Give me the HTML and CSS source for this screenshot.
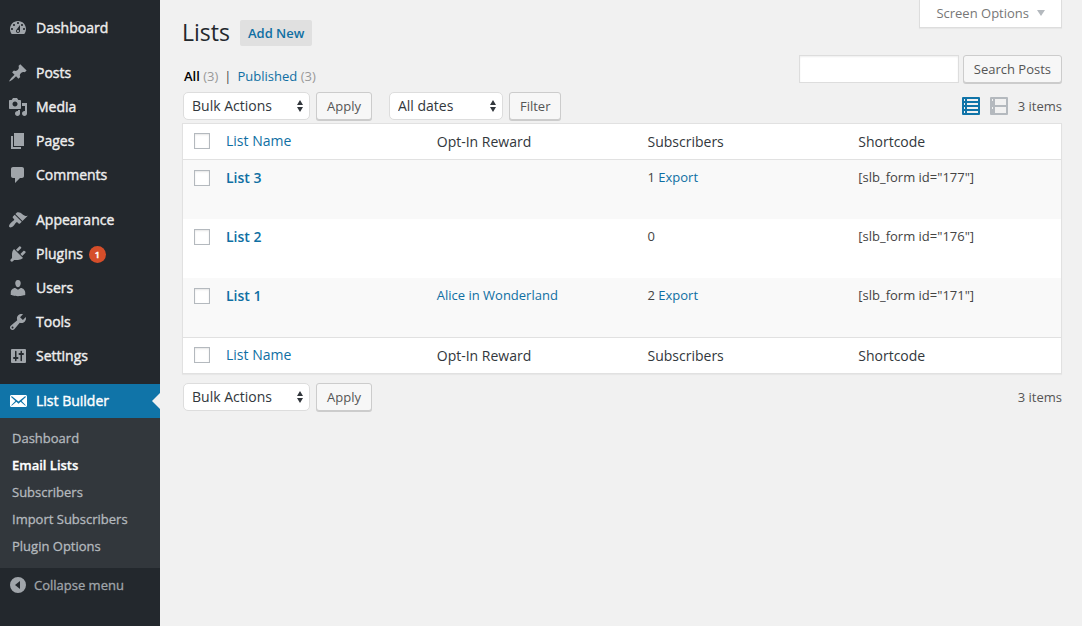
FILE: index.html
```
<!DOCTYPE html>
<html lang="en">
<head>
<meta charset="utf-8">
<title>Lists</title>
<link rel="stylesheet" href="styles.css">
</head>
<body>
<div class="layout">
  <nav class="sidebar" aria-label="Main menu">
    <ul class="menu">
      <li><a class="menu-item" href="#"><svg class="icon" viewBox="0 0 20 20"><path d="M3.76 16h12.48c1.1-1.37 1.76-3.11 1.76-5 0-4.42-3.58-8-8-8s-8 3.58-8 8c0 1.89.66 3.63 1.76 5zM10 4c.55 0 1 .45 1 1s-.45 1-1 1-1-.45-1-1 .45-1 1-1zM6 6c.55 0 1 .45 1 1s-.45 1-1 1-1-.45-1-1 .45-1 1-1zm8 0c.55 0 1 .45 1 1s-.45 1-1 1-1-.45-1-1 .45-1 1-1zm-5.370 5.550L12 7v6c0 1.100-.9 2-2 2s-2-.9-2-2c0-.57.24-1.080.63-1.450zM4 10c.55 0 1 .45 1 1s-.45 1-1 1-1-.45-1-1 .45-1 1-1zm12 0c.55 0 1 .45 1 1s-.45 1-1 1-1-.45-1-1 .45-1 1-1zm-5 3c0-.55-.45-1-1-1s-1 .45-1 1 .45 1 1 1 1-.45 1-1z"/></svg>Dashboard</a></li>
      <li class="group-start"><a class="menu-item" href="#"><svg class="icon" viewBox="0 0 20 20"><path d="M10.440 3.020l1.820-1.820 6.360 6.350-1.830 1.820c-1.050-.68-2.480-.57-3.410.36l-.75.75c-.92.93-1.040 2.350-.35 3.410l-1.830 1.820-2.410-2.410-2.800 2.790c-.42.42-3.380 2.710-3.800 2.290s1.860-3.390 2.280-3.810l2.790-2.790L4.100 9.360l1.830-1.820c1.050.69 2.480.57 3.400-.36l.75-.75c.93-.92 1.050-2.350.36-3.410z"/></svg>Posts</a></li>
      <li><a class="menu-item" href="#"><svg class="icon" viewBox="0 0 20 20"><path d="M13 11V4c0-.55-.45-1-1-1h-1.670L9 1H5L3.670 3H2c-.55 0-1 .45-1 1v7c0 .55.45 1 1 1h10c.55 0 1-.45 1-1zM7 4.500c1.380 0 2.500 1.120 2.500 2.500S8.380 9.500 7 9.500 4.500 8.380 4.500 7 5.620 4.500 7 4.500zM14 6h5v10.500c0 1.380-1.120 2.500-2.500 2.500S14 17.880 14 16.500s1.120-2.500 2.500-2.500c.17 0 .34.02.5.05V9h-3V6zm-4 8.050V13h2v3.500c0 1.380-1.120 2.500-2.500 2.500S7 17.880 7 16.500 8.120 14 9.500 14c.17 0 .34.02.5.05z"/></svg>Media</a></li>
      <li><a class="menu-item" href="#"><svg class="icon" viewBox="0 0 20 20"><path d="M6 15V2h10v13H6zm-1 1h8v2H3V5h2v11z"/></svg>Pages</a></li>
      <li><a class="menu-item" href="#"><svg class="icon" viewBox="0 0 20 20"><path d="M5 2h9c1.100 0 2 .9 2 2v7c0 1.100-.9 2-2 2h-2l-5 5v-5H5c-1.100 0-2-.9-2-2V4c0-1.100.9-2 2-2z"/></svg>Comments</a></li>
      <li class="group-start"><a class="menu-item" href="#"><svg class="icon" viewBox="0 0 20 20"><path d="M14.480 11.060L7.410 3.990l1.500-1.500c.5-.56 2.300-.47 3.510.32 1.210.8 1.430 1.280 2.910 2.100 1.180.64 2.450 1.260 4.450.85zm-.71.71L6.700 4.700 4.930 6.470c-.39.39-.39 1.020 0 1.410l1.060 1.060c.39.39.39 1.030 0 1.420-.6.6-1.430 1.110-2.210 1.690-.35.26-.7.53-1.010.84C1.430 14.230.4 16.080 1.400 17.070c.99 1 2.840-.03 4.180-1.360.31-.31.58-.66.85-1.020.57-.78 1.080-1.610 1.690-2.210.39-.39 1.020-.39 1.410 0l1.060 1.060c.39.39 1.020.39 1.410 0z"/></svg>Appearance</a></li>
      <li><a class="menu-item" href="#"><svg class="icon" viewBox="0 0 20 20"><path d="M13.110 4.360L9.870 7.600 8 5.730l3.240-3.240c.35-.34 1.050-.2 1.560.32.52.51.66 1.210.31 1.550zm-8 1.770l.91-1.120 9.010 9.010-1.190.84c-.71.71-2.630 1.160-3.820 1.160H6.140L4.900 17.260c-.59.59-1.540.59-2.120 0-.59-.58-.59-1.530 0-2.120l1.240-1.240v-3.880c0-1.130.4-3.190 1.090-3.890zm7.260 3.970l3.240-3.240c.34-.35 1.040-.21 1.550.31.52.51.66 1.210.31 1.550l-3.240 3.250z"/></svg>Plugins <span class="count-badge">1</span></a></li>
      <li><a class="menu-item" href="#"><svg class="icon" viewBox="0 0 20 20"><path d="M10 9.250c-2.270 0-2.730-3.440-2.730-3.440C7 4.020 7.820 2 9.970 2c2.160 0 2.980 2.020 2.710 3.810 0 0-.41 3.440-2.680 3.440zm0 2.570L12.720 10c2.390 0 4.520 2.330 4.520 4.530v2.490s-3.650 1.130-7.240 1.130c-3.650 0-7.240-1.130-7.240-1.130v-2.490c0-2.250 1.940-4.480 4.470-4.480z"/></svg>Users</a></li>
      <li><a class="menu-item" href="#"><svg class="icon" viewBox="0 0 20 20"><path d="M16.680 9.770c-1.340 1.340-3.300 1.670-4.950.99l-5.410 6.520c-.99.99-2.590.99-3.580 0s-.99-2.590 0-3.570l6.520-5.420c-.68-1.650-.35-3.610.99-4.950 1.280-1.280 3.120-1.620 4.720-1.060l-2.890 2.890 2.820 2.820 2.860-2.870c.53 1.580.18 3.390-1.080 4.650zM3.810 16.210c.4.39 1.040.39 1.430 0 .4-.4.4-1.040 0-1.430-.39-.4-1.030-.4-1.430 0-.39.39-.39 1.030 0 1.430z"/></svg>Tools</a></li>
      <li><a class="menu-item" href="#"><svg class="icon" viewBox="0 0 20 20"><path fill-rule="evenodd" d="M4 3h13a1 1 0 0 1 1 1v12a1 1 0 0 1-1 1H4a1 1 0 0 1-1-1V4a1 1 0 0 1 1-1zM7 5.500V11H6a1 1 0 0 0 0 2h1v1.500a.75.75 0 0 0 1.500 0V13h1a1 1 0 0 0 0-2h-1V5.500a.75.75 0 0 0-1.500 0zM12.500 5.500V7h-1a1 1 0 0 0 0 2h1v5.500a.75.75 0 0 0 1.500 0V9h1a1 1 0 0 0 0-2h-1V5.500a.75.75 0 0 0-1.500 0z"/></svg>Settings</a></li>
      <li class="group-start">
        <a class="menu-item current" href="#"><svg class="icon" viewBox="0 0 20 20"><path d="M19 14.500v-9c0-.83-.67-1.500-1.500-1.500H3.490c-.83 0-1.500.67-1.500 1.500v9c0 .83.67 1.500 1.500 1.500H17.500c.83 0 1.500-.67 1.500-1.500zm-1.310-9.110c.33.33.15.67-.03.84L13.600 9.950l3.900 4.060c.12.14.2.36.06.51-.13.16-.43.15-.56.05l-4.370-3.730-2.140 1.950-2.130-1.950-4.370 3.730c-.13.1-.43.11-.56-.05-.14-.15-.06-.37.06-.51l3.900-4.060-4.060-3.720c-.18-.17-.36-.51-.03-.84s.67-.17.95.07l6.240 5.040 6.250-5.040c.28-.24.62-.4.95-.07z"/></svg>List Builder</a>
        <ul class="submenu">
          <li><a href="#">Dashboard</a></li>
          <li><a class="active" href="#">Email Lists</a></li>
          <li><a href="#">Subscribers</a></li>
          <li><a href="#">Import Subscribers</a></li>
          <li><a href="#">Plugin Options</a></li>
        </ul>
      </li>
    </ul>
    <button class="collapse" type="button"><svg class="icon" viewBox="0 0 20 20"><path fill-rule="evenodd" d="M10 2a8 8 0 1 0 0 16 8 8 0 0 0 0-16zM12 6v8l-5-4z"/></svg>Collapse menu</button>
  </nav>

  <main class="content">
    <header class="page-head">
      <div class="title">
        <h1>Lists</h1>
        <a class="add-new" href="#">Add New</a>
      </div>
      <button class="screen-options" type="button">Screen Options <svg class="caret" viewBox="0 0 8 6"><path d="M0 0h8L4 6z"/></svg></button>
    </header>

    <div class="views-row">
      <ul class="views">
        <li><a class="all" href="#">All</a> <span class="count">(3)</span></li>
        <li class="bar">|</li>
        <li><a href="#">Published</a> <span class="count">(3)</span></li>
      </ul>
      <form class="search">
        <input class="search-box" type="search" aria-label="Search Posts">
        <button class="button" type="button">Search Posts</button>
      </form>
    </div>

    <div class="tablenav">
      <div class="actions">
        <span class="select-wrap bulk"><select aria-label="Select bulk action"><option>Bulk Actions</option></select><svg class="arrows" viewBox="0 0 8 12"><path d="M1 5l3-5 3 5zM1 7h6l-3 5z"/></svg></span>
        <button class="button" type="button">Apply</button>
      </div>
      <div class="actions">
        <span class="select-wrap dates"><select aria-label="Filter by date"><option>All dates</option></select><svg class="arrows" viewBox="0 0 8 12"><path d="M1 5l3-5 3 5zM1 7h6l-3 5z"/></svg></span>
        <button class="button" type="button">Filter</button>
      </div>
      <div class="view-switch">
        <a class="mode on" href="#" aria-label="List view"><svg viewBox="0 0 18 18"><path fill-rule="evenodd" d="M0 1a1 1 0 0 1 1-1h16a1 1 0 0 1 1 1v16a1 1 0 0 1-1 1H1a1 1 0 0 1-1-1zM2 2v2h1V2zM5 2v2h11V2zM2 6v2h1V6zM5 6v2h11V6zM2 10v2h1v-2zM5 10v2h11v-2zM2 14v2h1v-2zM5 14v2h11v-2z"/></svg></a>
        <a class="mode" href="#" aria-label="Excerpt view"><svg viewBox="0 0 18 18"><path fill-rule="evenodd" d="M0 1a1 1 0 0 1 1-1h16a1 1 0 0 1 1 1v16a1 1 0 0 1-1 1H1a1 1 0 0 1-1-1zM2 2v2h1V2zM5 2v6h11V2zM2 10v2h1v-2zM5 10v6h11v-6z"/></svg></a>
      </div>
      <span class="items">3 items</span>
    </div>

    <table class="list-table">
      <thead>
        <tr><th class="check"><input type="checkbox" aria-label="Select all"></th><th class="sortable"><a href="#">List Name</a></th><th>Opt-In Reward</th><th>Subscribers</th><th>Shortcode</th></tr>
      </thead>
      <tbody>
        <tr><td class="check"><input type="checkbox" aria-label="Select List 3"></td><td class="name"><a href="#">List 3</a></td><td></td><td>1 <a href="#">Export</a></td><td>[slb_form id="177"]</td></tr>
        <tr><td class="check"><input type="checkbox" aria-label="Select List 2"></td><td class="name"><a href="#">List 2</a></td><td></td><td>0</td><td>[slb_form id="176"]</td></tr>
        <tr><td class="check"><input type="checkbox" aria-label="Select List 1"></td><td class="name"><a href="#">List 1</a></td><td><a href="#">Alice in Wonderland</a></td><td>2 <a href="#">Export</a></td><td>[slb_form id="171"]</td></tr>
      </tbody>
      <tfoot>
        <tr><th class="check"><input type="checkbox" aria-label="Select all rows"></th><th class="sortable"><a href="#">List Name</a></th><th>Opt-In Reward</th><th>Subscribers</th><th>Shortcode</th></tr>
      </tfoot>
    </table>

    <div class="tablenav bottom">
      <div class="actions">
        <span class="select-wrap bulk"><select aria-label="Select bulk action for rows"><option>Bulk Actions</option></select><svg class="arrows" viewBox="0 0 8 12"><path d="M1 5l3-5 3 5zM1 7h6l-3 5z"/></svg></span>
        <button class="button" type="button">Apply</button>
      </div>
      <span class="items">3 items</span>
    </div>
  </main>
</div>
</body>
</html>
```
FILE: styles.css
```
* { box-sizing: border-box; }

body {
  margin: 0;
  background: #f1f1f1;
  color: #444;
  font: 13px/18px "Open Sans", sans-serif;
}

a { color: #0f6fa3; text-decoration: none; }
ul { margin: 0; padding: 0; list-style: none; }
button, input, select { font: inherit; color: inherit; margin: 0; }
svg { display: block; }

.layout { display: flex; min-height: 100vh; }

/* Sidebar */
.sidebar {
  flex: 0 0 160px;
  padding-top: 11px;
  background: #23282d;
}
.icon { flex: none; width: 20px; height: 20px; fill: #a0a5aa; }
.group-start { margin-top: 11px; }
.menu-item {
  position: relative;
  display: flex;
  align-items: center;
  gap: 8px;
  height: 34px;
  padding-left: 8px;
  color: #eee;
  font-size: 14px;
  -webkit-text-stroke: 0.4px;
}
.menu-item.current { background: #1074a8; color: #fff; }
.current .icon { fill: #fff; }
.menu-item.current::after {
  content: "";
  position: absolute;
  top: 9px;
  right: 0;
  border: 8px solid transparent;
  border-left-width: 0;
  border-right-color: #f1f1f1;
}
.count-badge {
  width: 17px;
  margin-left: -2px;
  border-radius: 9px;
  background: #d54e2a;
  color: #fff;
  font-size: 9px;
  font-weight: 600;
  line-height: 17px;
  text-align: center;
}
.submenu { padding: 7px 0 8px; background: #32373c; }
.submenu a {
  display: block;
  padding: 0 12px;
  color: #b4b9be;
  line-height: 27px;
  -webkit-text-stroke: 0.3px;
}
.submenu .active { color: #fff; font-weight: 600; }
.collapse {
  display: flex;
  align-items: center;
  gap: 6px;
  width: 100%;
  height: 34px;
  padding: 0 8px;
  border: 0;
  background: none;
  color: #a0a5aa;
  -webkit-text-stroke: 0.3px;
}

/* Page head */
.content { flex: 1; min-width: 0; padding: 0 20px 0 22px; }
.page-head { display: flex; justify-content: space-between; align-items: flex-start; }
.title { display: flex; align-items: flex-start; gap: 10px; padding-top: 20px; }
h1 { margin: 0; color: #23282d; font-size: 23px; font-weight: 400; line-height: 24px; }
.add-new {
  padding: 0 8px;
  border-radius: 2px;
  background: #e0e0e0;
  font-weight: 600;
  line-height: 26px;
}
.screen-options {
  display: flex;
  align-items: center;
  gap: 8px;
  height: 28px;
  padding: 0 16px 1px;
  border: 1px solid #ddd;
  border-top: 0;
  background: #fff;
  box-shadow: 0 1px 1px rgba(0, 0, 0, 0.04);
  color: #777;
}
.caret { width: 8px; height: 6px; fill: #b4b9be; }

/* Views and search */
.views-row { display: flex; justify-content: space-between; align-items: flex-end; margin-top: 9px; }
.views { display: flex; gap: 6px; padding-left: 2px; line-height: 14px; }
.views .all { color: #000; font-weight: 600; }
.count { color: #999; }
.search { display: flex; gap: 4px; }
.search-box {
  width: 160px;
  height: 28px;
  padding: 3px 5px;
  border: 1px solid #ddd;
  background: #fff;
  box-shadow: inset 0 1px 2px rgba(0, 0, 0, 0.07);
  appearance: none;
}
.button {
  height: 28px;
  padding: 0 10px;
  border: 1px solid #ccc;
  border-radius: 3px;
  background: #f7f7f7;
  box-shadow: 0 1px 0 #ccc;
  color: #555;
}

/* Table navigation */
.tablenav { display: flex; align-items: center; margin: 9px 0 3px; padding-left: 1px; }
.tablenav.bottom { margin-bottom: 0; }
.actions { display: flex; gap: 6px; margin-right: 17px; }
.select-wrap { position: relative; }
.select-wrap select {
  width: 100%;
  height: 28px;
  padding: 0 8px;
  border: 1px solid #ddd;
  border-radius: 5px;
  background: #fff;
  color: #32373c;
  font-size: 14px;
  appearance: none;
}
.bulk { width: 127px; }
.dates { width: 114px; }
.arrows {
  position: absolute;
  top: 8px;
  right: 6px;
  width: 8px;
  height: 12px;
  fill: #32373c;
  pointer-events: none;
}
.view-switch { display: flex; gap: 10px; margin-left: auto; }
.mode svg { width: 18px; height: 18px; fill: #b4b9be; }
.mode.on svg { fill: #1074a8; }
.items { margin-left: 10px; color: #555; }
.bottom .items { margin-left: auto; }

/* List table */
.list-table {
  width: 100%;
  table-layout: fixed;
  border: 1px solid #e1e1e1;
  border-spacing: 0;
  background: #fff;
  box-shadow: 0 1px 1px rgba(0, 0, 0, 0.04);
}
.list-table th, .list-table td { padding: 8px; text-align: left; vertical-align: top; }
.list-table th { color: #32373c; font-size: 14px; font-weight: 400; line-height: 19px; }
.list-table .sortable { line-height: 17px; }
thead th { border-bottom: 1px solid #e1e1e1; }
tfoot th { border-top: 1px solid #e1e1e1; }
.list-table .check { width: 35px; padding: 9px 0 0 11px; }
.list-table td { height: 59px; line-height: 18px; color: #444; }
.list-table .name { font-size: 14px; font-weight: 600; line-height: 20px; }
.list-table td.check { padding-top: 10px; }
tbody tr:nth-child(odd) { background: #f9f9f9; }
.check input {
  display: block;
  width: 16px;
  height: 16px;
  border: 1px solid #b4b9be;
  background: #fff;
  box-shadow: inset 0 1px 2px rgba(0, 0, 0, 0.1);
  appearance: none;
}
```
